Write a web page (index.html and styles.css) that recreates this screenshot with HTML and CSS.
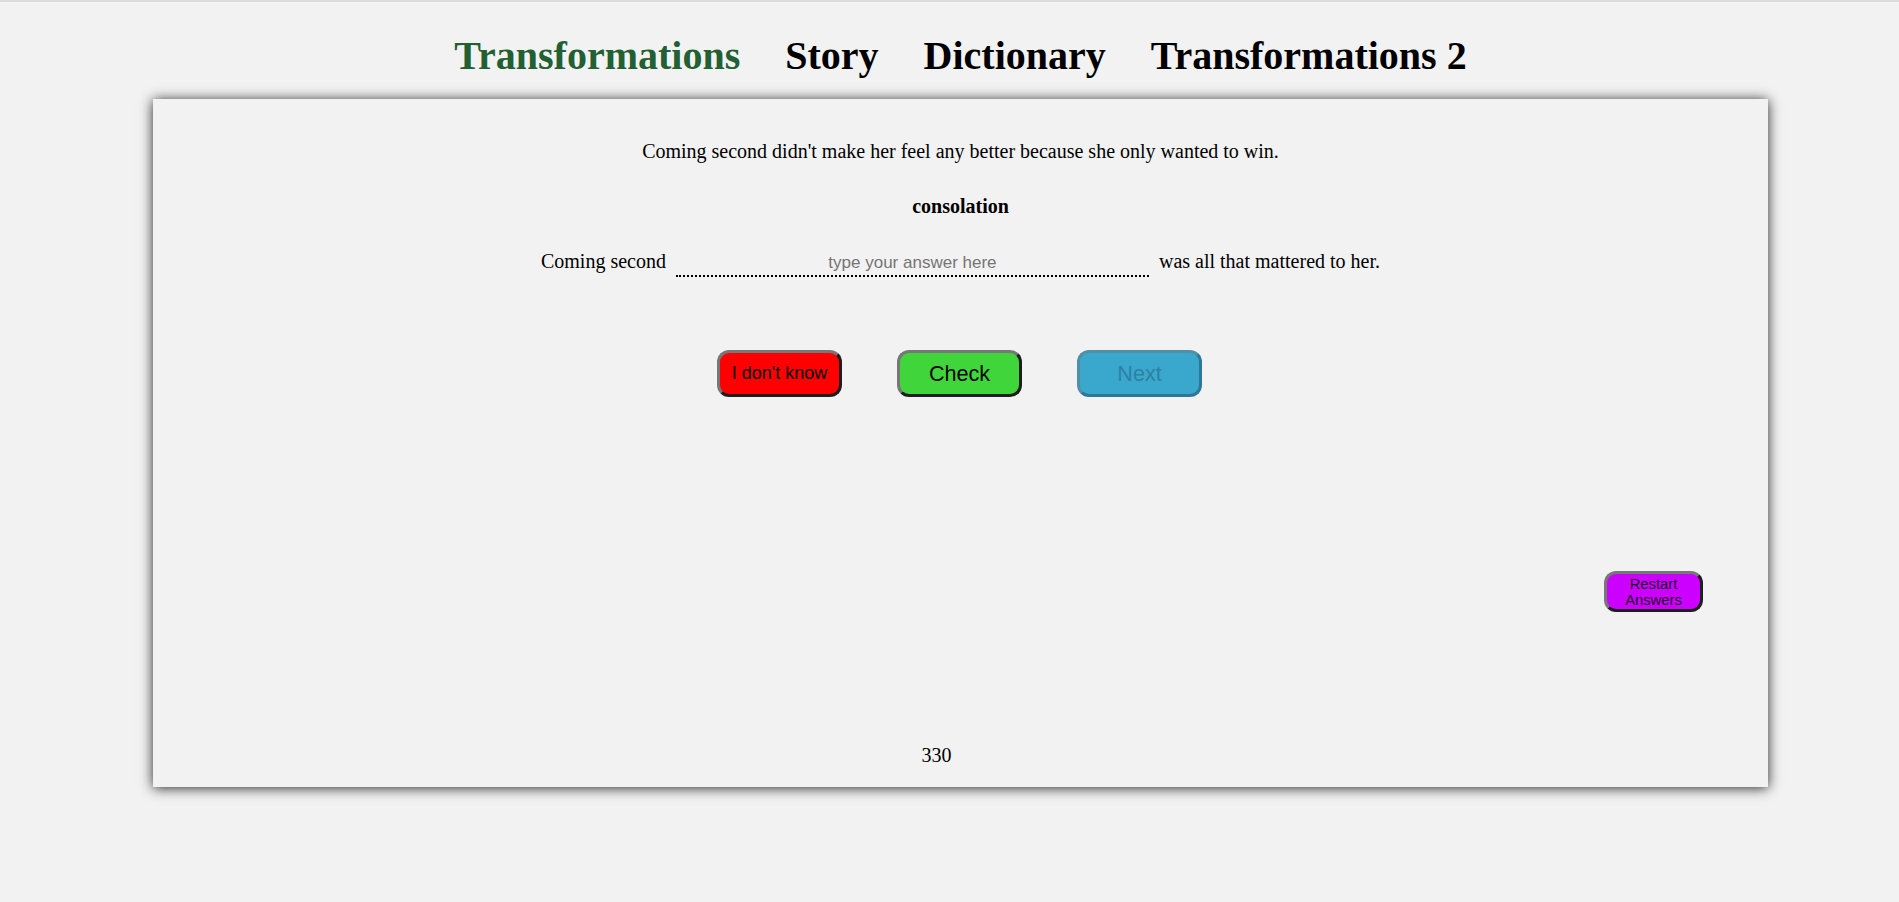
FILE: index.html
```html
<!DOCTYPE html>
<html lang="en">
<head>
<meta charset="utf-8">
<title>Transformations</title>
<link rel="stylesheet" href="styles.css">
</head>
<body>
  <nav class="nav">
    <a class="nav-item active">Transformations</a>
    <a class="nav-item">Story</a>
    <a class="nav-item">Dictionary</a>
    <a class="nav-item">Transformations 2</a>
  </nav>
  <main class="panel">
    <p class="sentence">Coming second didn't make her feel any better because she only wanted to win.</p>
    <p class="keyword">consolation</p>
    <div class="answer-row">Coming second <input class="answer" type="text" placeholder="type your answer here"> was all that mattered to her.</div>
    <div class="buttons">
      <button class="btn btn-dontknow">I don't know</button>
      <button class="btn btn-check">Check</button>
      <button class="btn btn-next">Next</button>
    </div>
    <div class="restart-row">
      <button class="btn btn-restart">Restart<br>Answers</button>
    </div>
    <div class="page-num">330</div>
  </main>
</body>
</html>
```

FILE: styles.css
```css
html, body {
  margin: 0;
  background: #f2f2f2;
}
body {
  border-top: 2px solid #dcdcdc;
  padding: 31px 0 0 22px;
  font-family: "Liberation Serif", "Times New Roman", serif;
  color: #000;
  min-height: 860px;
  box-sizing: border-box;
}
.nav {
  display: flex;
  justify-content: center;
  gap: 45px;
  height: 46px;
  line-height: 46px;
}
.nav-item {
  font-size: 40px;
  font-weight: bold;
  color: #000;
  text-decoration: none;
}
.nav-item.active {
  color: #225f33;
}
.panel {
  width: 1615px;
  height: 688px;
  box-sizing: border-box;
  margin: 20px auto 0;
  background: #f2f2f2;
  box-shadow: 0 1px 12px rgba(0, 0, 0, 0.85);
  display: flex;
  flex-direction: column;
  align-items: center;
  font-size: 20px;
  line-height: 23px;
}
.sentence {
  margin: 41px 0 0;
}
.keyword {
  margin: 32px 0 0;
  font-weight: bold;
}
.answer-row {
  margin-top: 32px;
}
.answer {
  width: 473px;
  height: 24px;
  box-sizing: border-box;
  margin: 0 5px;
  padding: 0 0 2px;
  border: none;
  border-bottom: 2px dotted #000;
  background: transparent;
  font-family: "Liberation Sans", Arial, sans-serif;
  font-size: 17px;
  text-align: center;
  outline: none;
}
.answer::placeholder {
  color: #757575;
}
.buttons {
  display: flex;
  gap: 55px;
  margin-top: 73px;
  margin-left: -2px;
}
.btn {
  box-sizing: border-box;
  width: 125px;
  height: 47px;
  border: 3px solid;
  border-color: #777 #1e1e1e #1e1e1e #777;
  border-radius: 12px;
  font-family: "Liberation Sans", Arial, sans-serif;
  color: #000;
  padding: 0;
  cursor: pointer;
}
.btn-dontknow {
  background: #ff0000;
  font-size: 18px;
}
.btn-check {
  background: #40d63b;
  font-size: 21.6px;
}
.btn-next {
  background: #3aa8cc;
  font-size: 21.6px;
  color: #2d82a2;
  border-color: #4f90a8 #2d7896 #2d7896 #4f90a8;
}
.restart-row {
  align-self: stretch;
  display: flex;
  justify-content: flex-end;
  padding-right: 65px;
  margin-top: 174px;
}
.btn-restart {
  width: 99px;
  height: 41px;
  background: #cc00ff;
  font-size: 14.8px;
  line-height: 16px;
  color: #1a0022;
}
.page-num {
  margin-top: 132px;
  padding-right: 48px;
}
```
